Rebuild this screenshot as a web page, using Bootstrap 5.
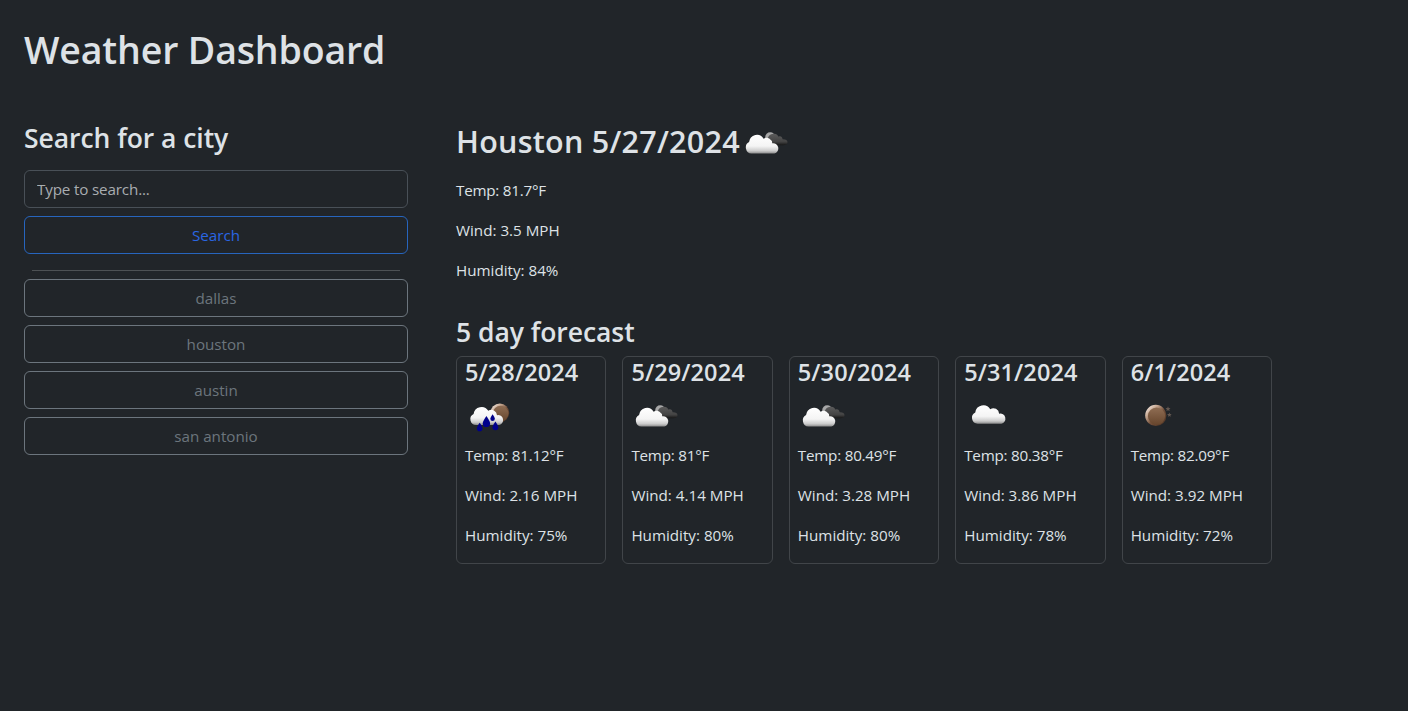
<!DOCTYPE html>
<html lang="en" data-bs-theme="dark">
<head>
<meta charset="utf-8">
<meta name="viewport" content="width=device-width, initial-scale=1">
<title>Weather Dashboard</title>
<link href="https://cdn.jsdelivr.net/npm/bootstrap@5.3.0/dist/css/bootstrap.min.css" rel="stylesheet">
<style>
  body { font-family: "Open Sans", "Noto Sans", sans-serif; background: #212529; color: #dee2e6; font-size: 15.2px; line-height: 24px; }
  h1, h2, h3, h4 { font-weight: 600; white-space: nowrap; color: #dee2e6; }
  h1 { font-size: 37.5px; line-height: 44px; padding-top: 4px; letter-spacing: -.15px; }
  h2 { font-size: 30.5px; letter-spacing: .25px; }
  h2 span { padding-bottom: 7px; margin-right: 1px; }
  h3 { font-size: 26.5px; line-height: 29.6px; padding-top: 4px; letter-spacing: -.05px; }
  h4 { font-size: 23.5px; line-height: 26.8px; padding-top: 2px; letter-spacing: .1px; }
  p { margin-bottom: 16px; }
  .btn, .form-control { font-size: 15.2px; line-height: 24px; }
  .form-control { letter-spacing: -.15px; }
  .form-control::placeholder { color: #a9adb1; }
  .btn-outline-primary { --bs-btn-color: #2a66e3; --bs-btn-border-color: #2765bd; }
  .sidebar { width: 384px; }
  .forecast { width: 816px; }
  .forecast-title { margin-top: 32px; }
  .day { flex: 1 1 0; border-color: #414549 !important; }
  .temp { letter-spacing: -.22px; }
  .weather-icon { width: 50px; height: 50px; display: block; flex: none; }
  .divider { height: 1px; background: #4d5154; }
</style>
</head>
<body>
<svg width="0" height="0" class="position-absolute" aria-hidden="true">
  <defs>
    <linearGradient id="white" x1="0" y1="0" x2="0" y2="1"><stop offset="0" stop-color="#fff"/><stop offset=".6" stop-color="#f4f4f4"/><stop offset=".85" stop-color="#ccc"/><stop offset="1" stop-color="#8a8a8a"/></linearGradient>
    <linearGradient id="dark" x1="0" y1="0" x2="0" y2="1"><stop offset="0" stop-color="#5c5c5c"/><stop offset=".7" stop-color="#434343"/><stop offset="1" stop-color="#151515"/></linearGradient>
    <linearGradient id="rim" x1=".1" y1=".1" x2=".8" y2=".8"><stop offset="0" stop-color="#f3e6dc"/><stop offset=".3" stop-color="#c4a58f"/><stop offset=".65" stop-color="#74503a"/><stop offset="1" stop-color="#5b3d2a"/></linearGradient>
    <linearGradient id="bronze" x1="0" y1="0" x2="0" y2="1"><stop offset="0" stop-color="#8f6d53"/><stop offset="1" stop-color="#67462d"/></linearGradient>
    <path id="cloud" d="M6 19A5.8 5.8 0 0 1 3.6 8A8 8 0 0 1 18.3 4.8A5.6 5.6 0 0 1 27 9.2A4.9 4.9 0 1 1 29.2 19Z"/>
    <path id="drop" d="M0-5Q3.2-.4 3.2 1.4A3.2 3.2 0 0 1-3.2 1.4Q-3.2-.4 0-5Z" fill="#00008b"/>
    <symbol id="broken" viewBox="0 0 50 50">
      <circle cx="29.2" cy="17.2" r="5" fill="#a8a8a8"/>
      <path d="M27 24.5C26 18.5 27 15 31 14Q36 12.8 37.2 16.5Q41 15.2 41.6 19.3Q46.5 19.2 46.5 22.2Q46.5 25.1 42 25.3H29Z" fill="url(#dark)"/>
      <use href="#cloud" transform="translate(4.5 13.8) scale(.99 1.04)" fill="url(#white)"/>
    </symbol>
    <symbol id="scattered" viewBox="0 0 50 50"><use href="#cloud" transform="translate(7.6 11.3) scale(1.02)" fill="url(#white)"/></symbol>
    <symbol id="rain" viewBox="0 0 50 50">
      <circle cx="34.8" cy="19.8" r="9.4" fill="url(#rim)"/><circle cx="35.6" cy="20.6" r="7.8" fill="url(#bronze)"/>
      <use href="#cloud" transform="translate(5 13)" fill="url(#white)"/>
      <use href="#drop" transform="translate(14.7 34.2) scale(.88)"/>
      <use href="#drop" transform="translate(21.4 28.8) scale(1.15)"/>
      <use href="#drop" transform="translate(27.6 24.7) scale(.7)"/>
      <use href="#drop" transform="translate(30.4 33) scale(.92)"/>
    </symbol>
    <symbol id="night" viewBox="0 0 50 50">
      <circle cx="24.8" cy="22.4" r="10.6" fill="url(#rim)"/><circle cx="25.5" cy="23.1" r="8.6" fill="url(#bronze)"/>
      <path d="M37 13.3l.7 1.7 1.8.1-1.3 1.2.5 1.8-1.7-.9-1.6.9.4-1.8-1.3-1.2 1.8-.1ZM38.4 19.4l.6 1.6 1.7.1-1.3 1.1.4 1.6-1.4-.9-1.5.9.5-1.6-1.4-1.1 1.8-.1Z" fill="#625750"/>
    </symbol>
  </defs>
</svg>
<header class="p-4"><h1 class="mb-2">Weather Dashboard</h1></header>
<main class="d-flex px-4 gap-5 pt-3">
  <aside class="sidebar d-flex flex-column gap-2">
    <h3 class="mb-2">Search for a city</h3>
    <input class="form-control" type="text" placeholder="Type to search..." aria-label="City">
    <button class="btn btn-outline-primary" type="button">Search</button>
    <div class="divider mx-2 mt-2"></div>
    <button class="btn btn-outline-secondary" type="button">dallas</button>
    <button class="btn btn-outline-secondary" type="button">houston</button>
    <button class="btn btn-outline-secondary" type="button">austin</button>
    <button class="btn btn-outline-secondary" type="button">san antonio</button>
  </aside>
  <section class="forecast">
    <div class="current">
      <h2 class="d-flex align-items-center mb-2"><span>Houston 5/27/2024</span><svg class="weather-icon"><use href="#broken"/></svg></h2>
      <p class="temp">Temp: 81.7°F</p><p>Wind: 3.5 MPH</p><p>Humidity: 84%</p>
    </div>
    <h3 class="forecast-title mb-2">5 day forecast</h3>
    <div class="d-flex gap-3">
      <div class="day border rounded-2 px-2"><h4>5/28/2024</h4><svg class="weather-icon"><use href="#rain"/></svg><p class="temp">Temp: 81.12°F</p><p>Wind: 2.16 MPH</p><p>Humidity: 75%</p></div>
      <div class="day border rounded-2 px-2"><h4>5/29/2024</h4><svg class="weather-icon"><use href="#broken"/></svg><p class="temp">Temp: 81°F</p><p>Wind: 4.14 MPH</p><p>Humidity: 80%</p></div>
      <div class="day border rounded-2 px-2"><h4>5/30/2024</h4><svg class="weather-icon"><use href="#broken"/></svg><p class="temp">Temp: 80.49°F</p><p>Wind: 3.28 MPH</p><p>Humidity: 80%</p></div>
      <div class="day border rounded-2 px-2"><h4>5/31/2024</h4><svg class="weather-icon"><use href="#scattered"/></svg><p class="temp">Temp: 80.38°F</p><p>Wind: 3.86 MPH</p><p>Humidity: 78%</p></div>
      <div class="day border rounded-2 px-2"><h4>6/1/2024</h4><svg class="weather-icon"><use href="#night"/></svg><p class="temp">Temp: 82.09°F</p><p>Wind: 3.92 MPH</p><p>Humidity: 72%</p></div>
    </div>
  </section>
</main>
<script src="https://cdn.jsdelivr.net/npm/bootstrap@5.3.0/dist/js/bootstrap.bundle.min.js"></script>
</body>
</html>
